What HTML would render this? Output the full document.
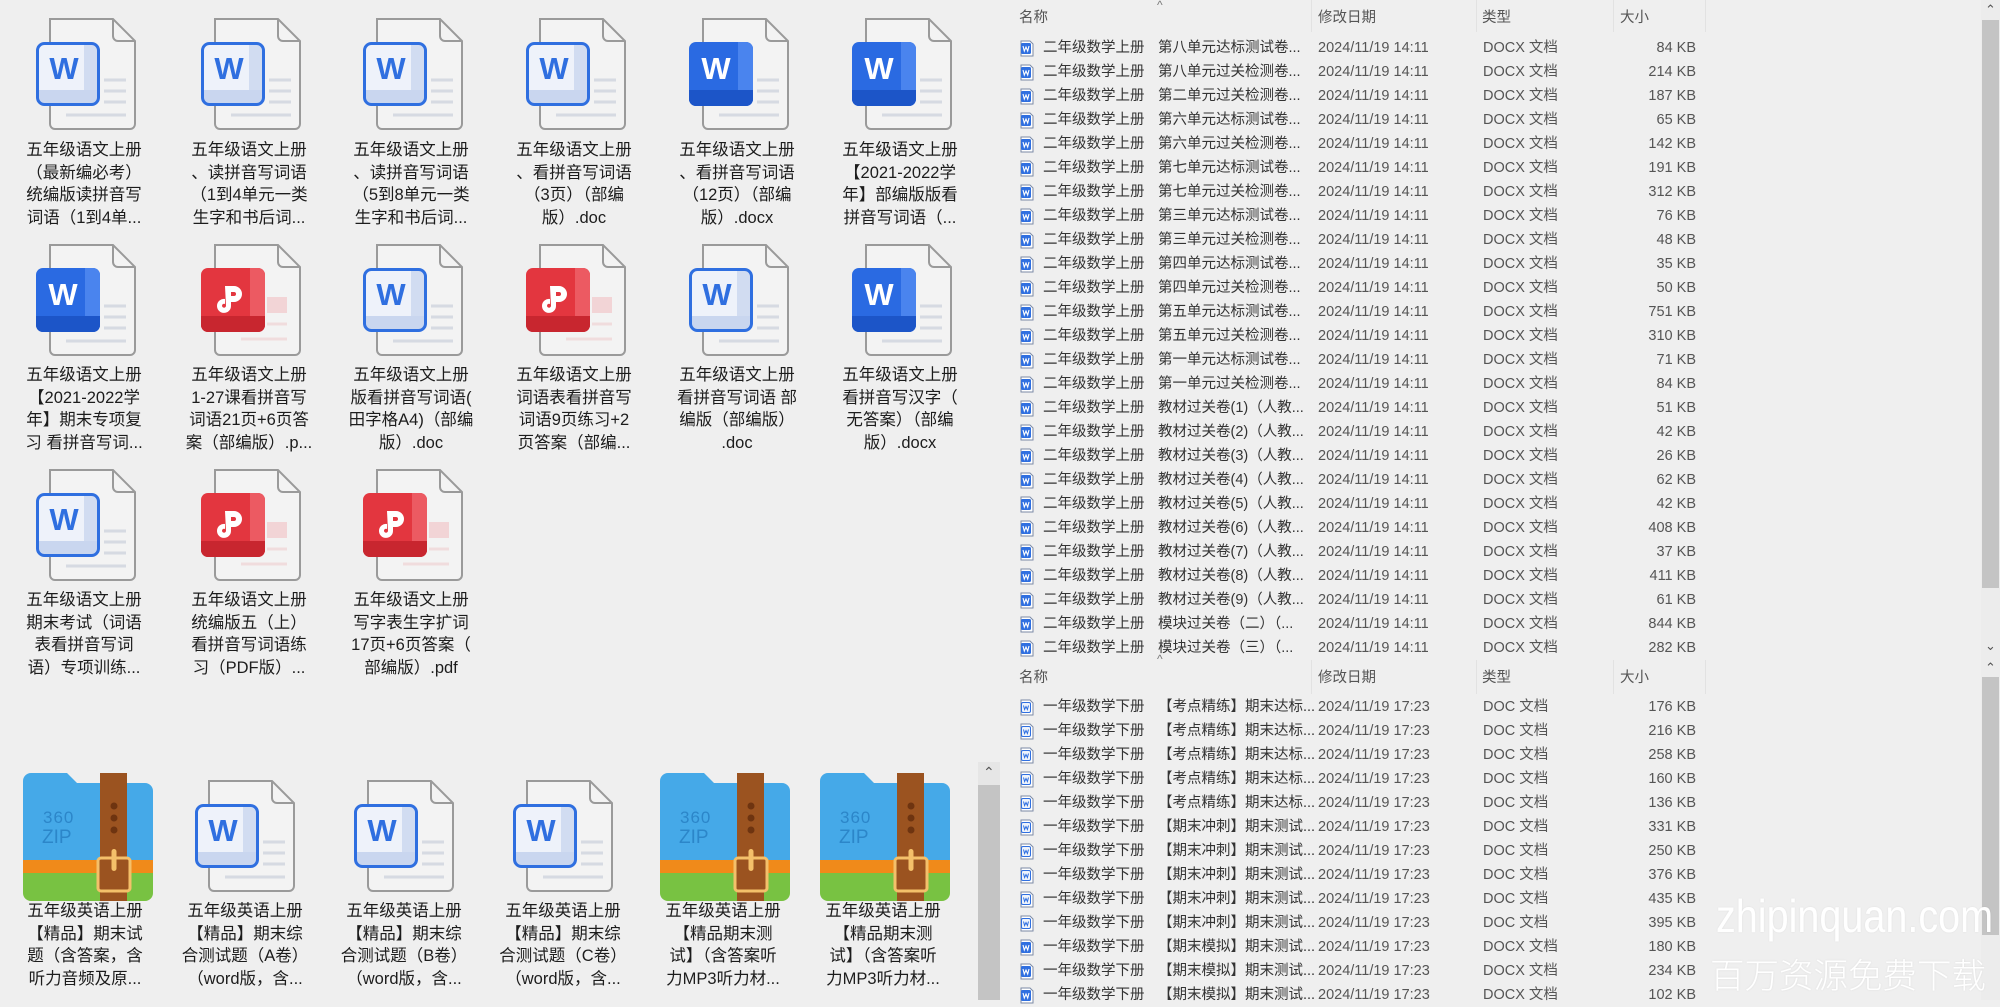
<!DOCTYPE html>
<html><head><meta charset="utf-8">
<style>
*{margin:0;padding:0;box-sizing:border-box}
body{width:2000px;height:1000px;overflow:hidden;background:#efefef;position:relative;font-family:"Liberation Sans","Noto Sans CJK SC",sans-serif;}
.ic{position:absolute;width:100px;height:112px}
.zi{position:absolute;width:130px;height:128px}
.lb{position:absolute;width:160px;text-align:center;font-size:16.5px;line-height:22.5px;color:#1c1c1c;white-space:nowrap}
.hd{position:absolute;height:34px;font-size:14.5px;color:#555;}
.hd span{position:absolute;top:6px}
.sep{position:absolute;width:1px;background:#e2e2e2}
.row{position:absolute;left:1020px;width:690px;height:24px;font-size:14.5px;color:#333;line-height:24px;white-space:nowrap}
.row svg{position:absolute;left:0;top:4px;width:14px;height:17px}
.row .a{position:absolute;left:23px}
.row .b{position:absolute;left:138px}
.row .d{position:absolute;left:298px;color:#555}
.row .t{position:absolute;left:463px;color:#555}
.row .s{position:absolute;right:14px;color:#555}
.caret{position:absolute;font-size:12px;color:#777}
</style></head><body>
<svg width="0" height="0" style="position:absolute">
<defs>
<symbol id="page" viewBox="0 0 100 112">
<path d="M14 1H77L99 23V106a5 5 0 0 1-5 5H19a5 5 0 0 1-5-5Z" fill="#f3f3f3" stroke="#9a9a9a" stroke-width="2"/>
<path d="M77 1V18a5 5 0 0 0 5 5H99" fill="none" stroke="#9a9a9a" stroke-width="2"/>
<path d="M68 62H90M68 73H90M68 84H90M30 97H90" stroke="#d6dae2" stroke-width="3"/>
</symbol>
<symbol id="pgp" viewBox="0 0 100 112">
<path d="M14 1H77L99 23V106a5 5 0 0 1-5 5H19a5 5 0 0 1-5-5Z" fill="#f3f3f3" stroke="#9a9a9a" stroke-width="2"/>
<path d="M77 1V18a5 5 0 0 0 5 5H99" fill="none" stroke="#9a9a9a" stroke-width="2"/>
<rect x="66" y="53" width="20" height="16" fill="#f2d4d6"/>
<path d="M66 80H86M40 95H86" stroke="#f0dcdd" stroke-width="3"/>
</symbol>
<symbol id="wl" viewBox="0 0 100 112">
<use href="#page"/>
<rect x="1.5" y="25.5" width="61" height="61" rx="7" fill="#eef2fa"/>
<path d="M1.5 72H62.5V80a6.5 6.5 0 0 1-6.5 6.5H8a6.5 6.5 0 0 1-6.5-6.5Z" fill="#c9d6ef"/>
<path d="M48 25.5H56a6.5 6.5 0 0 1 6.5 6.5V80H48Z" fill="#c9d6ef" opacity=".8"/>
<rect x="1.5" y="25.5" width="61" height="61" rx="7" fill="none" stroke="#2f6fe0" stroke-width="3"/>
<text x="28" y="61" text-anchor="middle" font-family="Liberation Sans" font-weight="bold" font-size="31" fill="#2f6fe0">W</text>
</symbol>
<symbol id="ws" viewBox="0 0 100 112">
<use href="#page"/>
<rect x="0" y="24" width="64" height="64" rx="7" fill="#2a6ae2"/>
<path d="M49 24H57a7 7 0 0 1 7 7V81a7 7 0 0 1-7 7H49Z" fill="#4a84ee"/>
<path d="M0 72H64V81a7 7 0 0 1-7 7H7a7 7 0 0 1-7-7Z" fill="#1c55c8"/>
<text x="27" y="61" text-anchor="middle" font-family="Liberation Sans" font-weight="bold" font-size="31" fill="#fff">W</text>
</symbol>
<symbol id="pdf" viewBox="0 0 100 112">
<use href="#pgp"/>
<rect x="0" y="24" width="64" height="64" rx="7" fill="#e3363f"/>
<path d="M49 24H57a7 7 0 0 1 7 7V81a7 7 0 0 1-7 7H49Z" fill="#ec5a62"/>
<path d="M0 72H64V81a7 7 0 0 1-7 7H7a7 7 0 0 1-7-7Z" fill="#c8262f"/>
<path d="M24 42h9a8 8 0 0 1 0 16h-4v-6h4a2 2 0 0 0 0-4h-3v14a7 7 0 1 1-6-7v5a2 2 0 1 0 1 2Z" fill="#fff"/>
</symbol>
<symbol id="zip" viewBox="0 0 130 128">
<path d="M8 0H44L54 10H122a8 8 0 0 1 8 8V88H0V8a8 8 0 0 1 8-8Z" fill="#45a9e8"/>
<rect x="0" y="87" width="130" height="13" fill="#f08a1a"/>
<path d="M0 100H130V120a8 8 0 0 1-8 8H8a8 8 0 0 1-8-8Z" fill="#78c242"/>
<rect x="77" y="0" width="27" height="128" fill="#9b5320"/>
<circle cx="91" cy="33" r="3.5" fill="#6e3410"/><circle cx="91" cy="45" r="3.5" fill="#6e3410"/><circle cx="91" cy="57" r="3.5" fill="#6e3410"/>
<rect x="75" y="85" width="32" height="33" rx="3" fill="#9b5320" stroke="#f4c06a" stroke-width="3"/>
<rect x="88.5" y="76" width="5" height="22" rx="2.5" fill="#f4c06a"/>
<text x="20" y="50" font-family="Liberation Sans" font-size="17" fill="#2c86c9" letter-spacing="1">360</text>
<text x="19" y="70" font-family="Liberation Sans" font-size="19" fill="#2c86c9">ZIP</text>
</symbol>
<symbol id="sw" viewBox="0 0 14 17">
<path d="M1 1H10L13 4V16H1Z" fill="#fff" stroke="#7b8aa6"/>
<rect x="1" y="3" width="10" height="11" rx="1.5" fill="#2f6fe0"/>
<path d="M3 6l1.3 5 1.7-4 1.7 4 1.3-5" stroke="#fff" stroke-width="1.1" fill="none"/>
</symbol>
<symbol id="sd" viewBox="0 0 14 17">
<path d="M1 1H10L13 4V16H1Z" fill="#fff" stroke="#7b8aa6"/>
<rect x="1.5" y="3.5" width="9" height="10" rx="1.5" fill="#eef3fb" stroke="#2f6fe0"/>
<path d="M3.5 6.5l1.1 4 1.4-3 1.4 3 1.1-4" stroke="#2f6fe0" stroke-width="1" fill="none"/>
</symbol>
</defs></svg>

<!-- top grid row 1 -->
<svg class="ic" style="left:36px;top:18px"><use href="#wl"/></svg>
<svg class="ic" style="left:201px;top:18px"><use href="#wl"/></svg>
<svg class="ic" style="left:363px;top:18px"><use href="#wl"/></svg>
<svg class="ic" style="left:526px;top:18px"><use href="#wl"/></svg>
<svg class="ic" style="left:689px;top:18px"><use href="#ws"/></svg>
<svg class="ic" style="left:852px;top:18px"><use href="#ws"/></svg>
<div class="lb" style="left:4px;top:139px">五年级语文上册<br>（最新编必考）<br>统编版读拼音写<br>词语（1到4单...</div>
<div class="lb" style="left:169px;top:139px">五年级语文上册<br>、读拼音写词语<br>（1到4单元一类<br>生字和书后词...</div>
<div class="lb" style="left:331px;top:139px">五年级语文上册<br>、读拼音写词语<br>（5到8单元一类<br>生字和书后词...</div>
<div class="lb" style="left:494px;top:139px">五年级语文上册<br>、看拼音写词语<br>（3页）（部编<br>版）.doc</div>
<div class="lb" style="left:657px;top:139px">五年级语文上册<br>、看拼音写词语<br>（12页）（部编<br>版）.docx</div>
<div class="lb" style="left:820px;top:139px">五年级语文上册<br>【2021-2022学<br>年】部编版版看<br>拼音写词语（...</div>
<!-- row 2 -->
<svg class="ic" style="left:36px;top:244px"><use href="#ws"/></svg>
<svg class="ic" style="left:201px;top:244px"><use href="#pdf"/></svg>
<svg class="ic" style="left:363px;top:244px"><use href="#wl"/></svg>
<svg class="ic" style="left:526px;top:244px"><use href="#pdf"/></svg>
<svg class="ic" style="left:689px;top:244px"><use href="#wl"/></svg>
<svg class="ic" style="left:852px;top:244px"><use href="#ws"/></svg>
<div class="lb" style="left:4px;top:364px">五年级语文上册<br>【2021-2022学<br>年】期末专项复<br>习 看拼音写词...</div>
<div class="lb" style="left:169px;top:364px">五年级语文上册<br>1-27课看拼音写<br>词语21页+6页答<br>案（部编版）.p...</div>
<div class="lb" style="left:331px;top:364px">五年级语文上册<br>版看拼音写词语(<br>田字格A4)（部编<br>版）.doc</div>
<div class="lb" style="left:494px;top:364px">五年级语文上册<br>词语表看拼音写<br>词语9页练习+2<br>页答案（部编...</div>
<div class="lb" style="left:657px;top:364px">五年级语文上册<br>看拼音写词语 部<br>编版（部编版）<br>.doc</div>
<div class="lb" style="left:820px;top:364px">五年级语文上册<br>看拼音写汉字（<br>无答案）（部编<br>版）.docx</div>
<!-- row 3 -->
<svg class="ic" style="left:36px;top:469px"><use href="#wl"/></svg>
<svg class="ic" style="left:201px;top:469px"><use href="#pdf"/></svg>
<svg class="ic" style="left:363px;top:469px"><use href="#pdf"/></svg>
<div class="lb" style="left:4px;top:589px">五年级语文上册<br>期末考试（词语<br>表看拼音写词<br>语）专项训练...</div>
<div class="lb" style="left:169px;top:589px">五年级语文上册<br>统编版五（上）<br>看拼音写词语练<br>习（PDF版）...</div>
<div class="lb" style="left:331px;top:589px">五年级语文上册<br>写字表生字扩词<br>17页+6页答案（<br>部编版）.pdf</div>
<!-- bottom grid -->
<svg class="zi" style="left:23px;top:773px"><use href="#zip"/></svg>
<svg class="ic" style="left:195px;top:780px"><use href="#wl"/></svg>
<svg class="ic" style="left:354px;top:780px"><use href="#wl"/></svg>
<svg class="ic" style="left:513px;top:780px"><use href="#wl"/></svg>
<svg class="zi" style="left:660px;top:773px"><use href="#zip"/></svg>
<svg class="zi" style="left:820px;top:773px"><use href="#zip"/></svg>
<div class="lb" style="left:5px;top:900px">五年级英语上册<br>【精品】期末试<br>题（含答案，含<br>听力音频及原...</div>
<div class="lb" style="left:165px;top:900px">五年级英语上册<br>【精品】期末综<br>合测试题（A卷）<br>（word版，含...</div>
<div class="lb" style="left:324px;top:900px">五年级英语上册<br>【精品】期末综<br>合测试题（B卷）<br>（word版，含...</div>
<div class="lb" style="left:483px;top:900px">五年级英语上册<br>【精品】期末综<br>合测试题（C卷）<br>（word版，含...</div>
<div class="lb" style="left:643px;top:900px">五年级英语上册<br>【精品期末测<br>试】（含答案听<br>力MP3听力材...</div>
<div class="lb" style="left:803px;top:900px">五年级英语上册<br>【精品期末测<br>试】（含答案听<br>力MP3听力材...</div>

<!-- middle scrollbar -->
<div style="position:absolute;left:978px;top:762px;width:22px;height:238px;background:#e6e6e6"></div>
<div style="position:absolute;left:978px;top:785px;width:22px;height:215px;background:#c4c4c4"></div>
<div class="caret" style="left:983px;top:764px;font-size:14px;color:#555">&#8963;</div>

<!-- right pane headers -->
<div class="hd" style="left:1000px;top:0;width:710px">
<span style="left:19px">名称</span><span style="left:318px">修改日期</span><span style="left:482px">类型</span><span style="left:620px">大小</span>
</div>
<div class="caret" style="left:1157px;top:-2px">^</div>
<div class="sep" style="left:1311px;top:0;height:32px"></div>
<div class="sep" style="left:1476px;top:0;height:32px"></div>
<div class="sep" style="left:1613px;top:0;height:32px"></div>
<div class="sep" style="left:1705px;top:0;height:32px"></div>

<div class="hd" style="left:1000px;top:660px;width:710px">
<span style="left:19px">名称</span><span style="left:318px">修改日期</span><span style="left:482px">类型</span><span style="left:620px">大小</span>
</div>
<div class="caret" style="left:1157px;top:652px">^</div>
<div class="sep" style="left:1311px;top:660px;height:34px"></div>
<div class="sep" style="left:1476px;top:660px;height:34px"></div>
<div class="sep" style="left:1613px;top:660px;height:34px"></div>
<div class="sep" style="left:1705px;top:660px;height:34px"></div>

<!-- top list -->
<div class="row" style="top:36px"><svg><use href="#sw"/></svg><span class="a">二年级数学上册</span><span class="b">第八单元达标测试卷...</span><span class="d">2024/11/19 14:11</span><span class="t">DOCX 文档</span><span class="s">84 KB</span></div>
<div class="row" style="top:60px"><svg><use href="#sw"/></svg><span class="a">二年级数学上册</span><span class="b">第八单元过关检测卷...</span><span class="d">2024/11/19 14:11</span><span class="t">DOCX 文档</span><span class="s">214 KB</span></div>
<div class="row" style="top:84px"><svg><use href="#sw"/></svg><span class="a">二年级数学上册</span><span class="b">第二单元过关检测卷...</span><span class="d">2024/11/19 14:11</span><span class="t">DOCX 文档</span><span class="s">187 KB</span></div>
<div class="row" style="top:108px"><svg><use href="#sw"/></svg><span class="a">二年级数学上册</span><span class="b">第六单元达标测试卷...</span><span class="d">2024/11/19 14:11</span><span class="t">DOCX 文档</span><span class="s">65 KB</span></div>
<div class="row" style="top:132px"><svg><use href="#sw"/></svg><span class="a">二年级数学上册</span><span class="b">第六单元过关检测卷...</span><span class="d">2024/11/19 14:11</span><span class="t">DOCX 文档</span><span class="s">142 KB</span></div>
<div class="row" style="top:156px"><svg><use href="#sw"/></svg><span class="a">二年级数学上册</span><span class="b">第七单元达标测试卷...</span><span class="d">2024/11/19 14:11</span><span class="t">DOCX 文档</span><span class="s">191 KB</span></div>
<div class="row" style="top:180px"><svg><use href="#sw"/></svg><span class="a">二年级数学上册</span><span class="b">第七单元过关检测卷...</span><span class="d">2024/11/19 14:11</span><span class="t">DOCX 文档</span><span class="s">312 KB</span></div>
<div class="row" style="top:204px"><svg><use href="#sw"/></svg><span class="a">二年级数学上册</span><span class="b">第三单元达标测试卷...</span><span class="d">2024/11/19 14:11</span><span class="t">DOCX 文档</span><span class="s">76 KB</span></div>
<div class="row" style="top:228px"><svg><use href="#sw"/></svg><span class="a">二年级数学上册</span><span class="b">第三单元过关检测卷...</span><span class="d">2024/11/19 14:11</span><span class="t">DOCX 文档</span><span class="s">48 KB</span></div>
<div class="row" style="top:252px"><svg><use href="#sw"/></svg><span class="a">二年级数学上册</span><span class="b">第四单元达标测试卷...</span><span class="d">2024/11/19 14:11</span><span class="t">DOCX 文档</span><span class="s">35 KB</span></div>
<div class="row" style="top:276px"><svg><use href="#sw"/></svg><span class="a">二年级数学上册</span><span class="b">第四单元过关检测卷...</span><span class="d">2024/11/19 14:11</span><span class="t">DOCX 文档</span><span class="s">50 KB</span></div>
<div class="row" style="top:300px"><svg><use href="#sw"/></svg><span class="a">二年级数学上册</span><span class="b">第五单元达标测试卷...</span><span class="d">2024/11/19 14:11</span><span class="t">DOCX 文档</span><span class="s">751 KB</span></div>
<div class="row" style="top:324px"><svg><use href="#sw"/></svg><span class="a">二年级数学上册</span><span class="b">第五单元过关检测卷...</span><span class="d">2024/11/19 14:11</span><span class="t">DOCX 文档</span><span class="s">310 KB</span></div>
<div class="row" style="top:348px"><svg><use href="#sw"/></svg><span class="a">二年级数学上册</span><span class="b">第一单元达标测试卷...</span><span class="d">2024/11/19 14:11</span><span class="t">DOCX 文档</span><span class="s">71 KB</span></div>
<div class="row" style="top:372px"><svg><use href="#sw"/></svg><span class="a">二年级数学上册</span><span class="b">第一单元过关检测卷...</span><span class="d">2024/11/19 14:11</span><span class="t">DOCX 文档</span><span class="s">84 KB</span></div>
<div class="row" style="top:396px"><svg><use href="#sw"/></svg><span class="a">二年级数学上册</span><span class="b">教材过关卷(1)（人教...</span><span class="d">2024/11/19 14:11</span><span class="t">DOCX 文档</span><span class="s">51 KB</span></div>
<div class="row" style="top:420px"><svg><use href="#sw"/></svg><span class="a">二年级数学上册</span><span class="b">教材过关卷(2)（人教...</span><span class="d">2024/11/19 14:11</span><span class="t">DOCX 文档</span><span class="s">42 KB</span></div>
<div class="row" style="top:444px"><svg><use href="#sw"/></svg><span class="a">二年级数学上册</span><span class="b">教材过关卷(3)（人教...</span><span class="d">2024/11/19 14:11</span><span class="t">DOCX 文档</span><span class="s">26 KB</span></div>
<div class="row" style="top:468px"><svg><use href="#sw"/></svg><span class="a">二年级数学上册</span><span class="b">教材过关卷(4)（人教...</span><span class="d">2024/11/19 14:11</span><span class="t">DOCX 文档</span><span class="s">62 KB</span></div>
<div class="row" style="top:492px"><svg><use href="#sw"/></svg><span class="a">二年级数学上册</span><span class="b">教材过关卷(5)（人教...</span><span class="d">2024/11/19 14:11</span><span class="t">DOCX 文档</span><span class="s">42 KB</span></div>
<div class="row" style="top:516px"><svg><use href="#sw"/></svg><span class="a">二年级数学上册</span><span class="b">教材过关卷(6)（人教...</span><span class="d">2024/11/19 14:11</span><span class="t">DOCX 文档</span><span class="s">408 KB</span></div>
<div class="row" style="top:540px"><svg><use href="#sw"/></svg><span class="a">二年级数学上册</span><span class="b">教材过关卷(7)（人教...</span><span class="d">2024/11/19 14:11</span><span class="t">DOCX 文档</span><span class="s">37 KB</span></div>
<div class="row" style="top:564px"><svg><use href="#sw"/></svg><span class="a">二年级数学上册</span><span class="b">教材过关卷(8)（人教...</span><span class="d">2024/11/19 14:11</span><span class="t">DOCX 文档</span><span class="s">411 KB</span></div>
<div class="row" style="top:588px"><svg><use href="#sw"/></svg><span class="a">二年级数学上册</span><span class="b">教材过关卷(9)（人教...</span><span class="d">2024/11/19 14:11</span><span class="t">DOCX 文档</span><span class="s">61 KB</span></div>
<div class="row" style="top:612px"><svg><use href="#sw"/></svg><span class="a">二年级数学上册</span><span class="b">模块过关卷（二）（...</span><span class="d">2024/11/19 14:11</span><span class="t">DOCX 文档</span><span class="s">844 KB</span></div>
<div class="row" style="top:636px"><svg><use href="#sw"/></svg><span class="a">二年级数学上册</span><span class="b">模块过关卷（三）（...</span><span class="d">2024/11/19 14:11</span><span class="t">DOCX 文档</span><span class="s">282 KB</span></div>

<!-- bottom list -->
<div class="row" style="top:695px"><svg><use href="#sd"/></svg><span class="a">一年级数学下册</span><span class="b">【考点精练】期末达标...</span><span class="d">2024/11/19 17:23</span><span class="t">DOC 文档</span><span class="s">176 KB</span></div>
<div class="row" style="top:719px"><svg><use href="#sd"/></svg><span class="a">一年级数学下册</span><span class="b">【考点精练】期末达标...</span><span class="d">2024/11/19 17:23</span><span class="t">DOC 文档</span><span class="s">216 KB</span></div>
<div class="row" style="top:743px"><svg><use href="#sd"/></svg><span class="a">一年级数学下册</span><span class="b">【考点精练】期末达标...</span><span class="d">2024/11/19 17:23</span><span class="t">DOC 文档</span><span class="s">258 KB</span></div>
<div class="row" style="top:767px"><svg><use href="#sd"/></svg><span class="a">一年级数学下册</span><span class="b">【考点精练】期末达标...</span><span class="d">2024/11/19 17:23</span><span class="t">DOC 文档</span><span class="s">160 KB</span></div>
<div class="row" style="top:791px"><svg><use href="#sd"/></svg><span class="a">一年级数学下册</span><span class="b">【考点精练】期末达标...</span><span class="d">2024/11/19 17:23</span><span class="t">DOC 文档</span><span class="s">136 KB</span></div>
<div class="row" style="top:815px"><svg><use href="#sd"/></svg><span class="a">一年级数学下册</span><span class="b">【期末冲刺】期末测试...</span><span class="d">2024/11/19 17:23</span><span class="t">DOC 文档</span><span class="s">331 KB</span></div>
<div class="row" style="top:839px"><svg><use href="#sd"/></svg><span class="a">一年级数学下册</span><span class="b">【期末冲刺】期末测试...</span><span class="d">2024/11/19 17:23</span><span class="t">DOC 文档</span><span class="s">250 KB</span></div>
<div class="row" style="top:863px"><svg><use href="#sd"/></svg><span class="a">一年级数学下册</span><span class="b">【期末冲刺】期末测试...</span><span class="d">2024/11/19 17:23</span><span class="t">DOC 文档</span><span class="s">376 KB</span></div>
<div class="row" style="top:887px"><svg><use href="#sd"/></svg><span class="a">一年级数学下册</span><span class="b">【期末冲刺】期末测试...</span><span class="d">2024/11/19 17:23</span><span class="t">DOC 文档</span><span class="s">435 KB</span></div>
<div class="row" style="top:911px"><svg><use href="#sd"/></svg><span class="a">一年级数学下册</span><span class="b">【期末冲刺】期末测试...</span><span class="d">2024/11/19 17:23</span><span class="t">DOC 文档</span><span class="s">395 KB</span></div>
<div class="row" style="top:935px"><svg><use href="#sw"/></svg><span class="a">一年级数学下册</span><span class="b">【期末模拟】期末测试...</span><span class="d">2024/11/19 17:23</span><span class="t">DOCX 文档</span><span class="s">180 KB</span></div>
<div class="row" style="top:959px"><svg><use href="#sw"/></svg><span class="a">一年级数学下册</span><span class="b">【期末模拟】期末测试...</span><span class="d">2024/11/19 17:23</span><span class="t">DOCX 文档</span><span class="s">234 KB</span></div>
<div class="row" style="top:983px"><svg><use href="#sw"/></svg><span class="a">一年级数学下册</span><span class="b">【期末模拟】期末测试...</span><span class="d">2024/11/19 17:23</span><span class="t">DOCX 文档</span><span class="s">102 KB</span></div>

<!-- right scrollbars -->
<div style="position:absolute;left:1981px;top:0;width:19px;height:1000px;background:#ececec"></div>
<div style="position:absolute;left:1982px;top:20px;width:17px;height:568px;background:#c4c4c4"></div>
<div style="position:absolute;left:1982px;top:677px;width:17px;height:258px;background:#c4c4c4"></div>
<div class="caret" style="left:1985px;top:2px;font-size:13px;color:#555">&#8963;</div>
<div class="caret" style="left:1985px;top:638px;font-size:13px;color:#555">&#8964;</div>
<div class="caret" style="left:1985px;top:660px;font-size:13px;color:#555">&#8963;</div>

<!-- watermark -->
<div style="position:absolute;left:1716px;top:888px;font-family:'Liberation Sans',sans-serif;font-size:46px;line-height:56px;color:#fff;text-shadow:0 0 2px rgba(0,0,0,.08);white-space:nowrap;transform:scaleX(0.86);transform-origin:0 0">zhipinquan.com</div>
<div style="position:absolute;left:1710px;top:950px;font-family:'Noto Sans CJK SC',sans-serif;font-weight:300;font-size:34.5px;line-height:46px;color:#fff;text-shadow:0 0 2px rgba(0,0,0,.08);white-space:nowrap">百万资源免费下载</div>
</body></html>
